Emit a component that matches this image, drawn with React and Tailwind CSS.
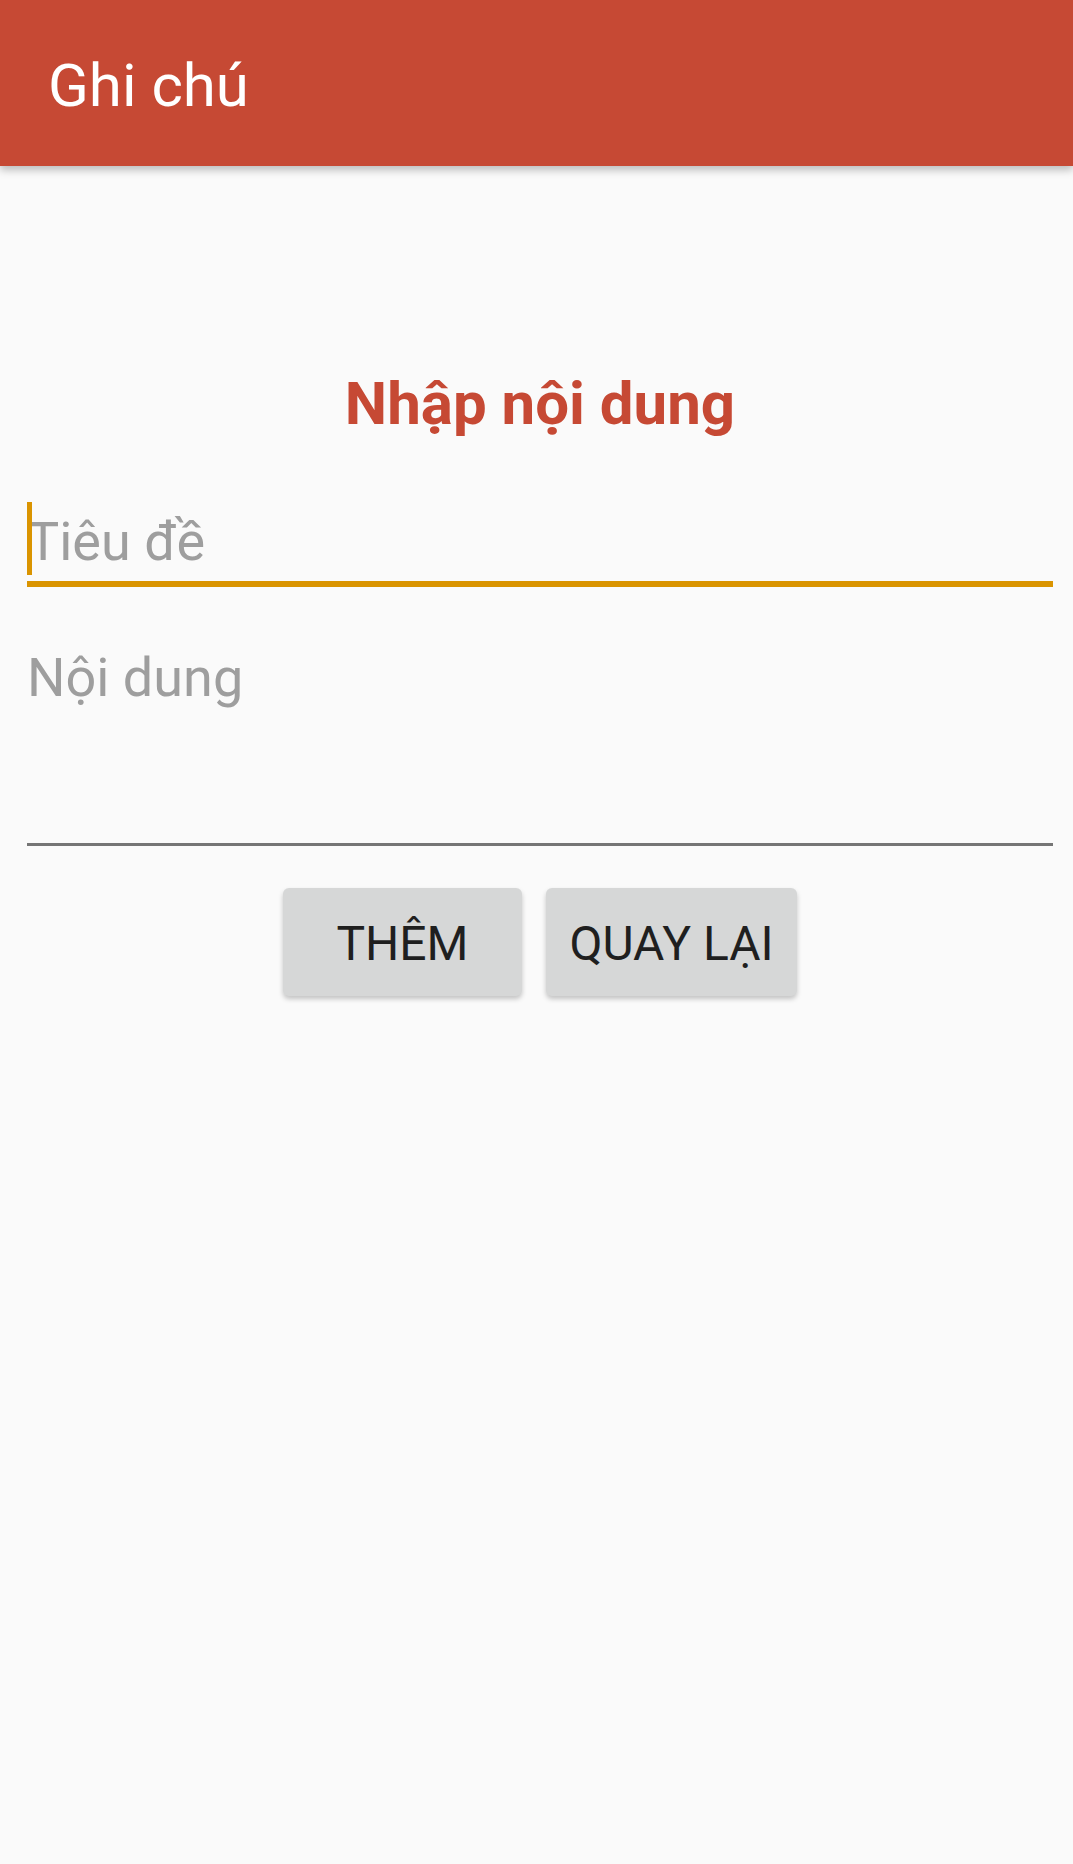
const NoteForm = () => {
  return (
    <div className="flex flex-col pt-[203px]">
      <h1 className="text-center pl-[7px] text-[60px] leading-[70px] font-bold text-[#C64934]">
        Nhập nội dung
      </h1>

      <div className="relative mt-[66px] ml-[27px] mr-[20px] pb-[3px] border-b-[6px] border-[#DA9400]">
        <span className="absolute left-0 top-[-3px] h-[73px] w-[5px] bg-[#DA9400]" />
        <div className="text-[54px] leading-[73px] text-[#9E9E9E]">Tiêu đề</div>
      </div>

      <div className="mt-[54px] ml-[27px] mr-[20px] h-[205px] border-b-[3px] border-[#757575]">
        <div className="text-[54px] leading-[73px] text-[#9E9E9E]">Nội dung</div>
      </div>

      <div className="flex justify-center gap-[24px] mt-[42px] pl-[7px]">
        <button className="h-[108px] w-[239px] pt-[3px] rounded-[6px] bg-[#D6D7D7] text-[48px] text-[#1F1F1F] shadow-[0_3px_5px_rgba(0,0,0,0.22)]">
          THÊM
        </button>
        <button className="h-[108px] w-[251px] pt-[3px] rounded-[6px] bg-[#D6D7D7] text-[48px] text-[#1F1F1F] shadow-[0_3px_5px_rgba(0,0,0,0.22)]">
          QUAY LẠI
        </button>
      </div>
    </div>
  );
};

export default function App() {
  return (
    <div className="min-h-screen bg-[#FAFAFA] font-['Roboto',sans-serif]">
      <header className="relative z-10 flex items-center h-[166px] pl-[48px] pt-[6px] bg-[#C64934] shadow-[0_4px_8px_rgba(0,0,0,0.25)]">
        <span className="text-[60px] leading-none text-white">Ghi chú</span>
      </header>
      <NoteForm />
    </div>
  );
}
